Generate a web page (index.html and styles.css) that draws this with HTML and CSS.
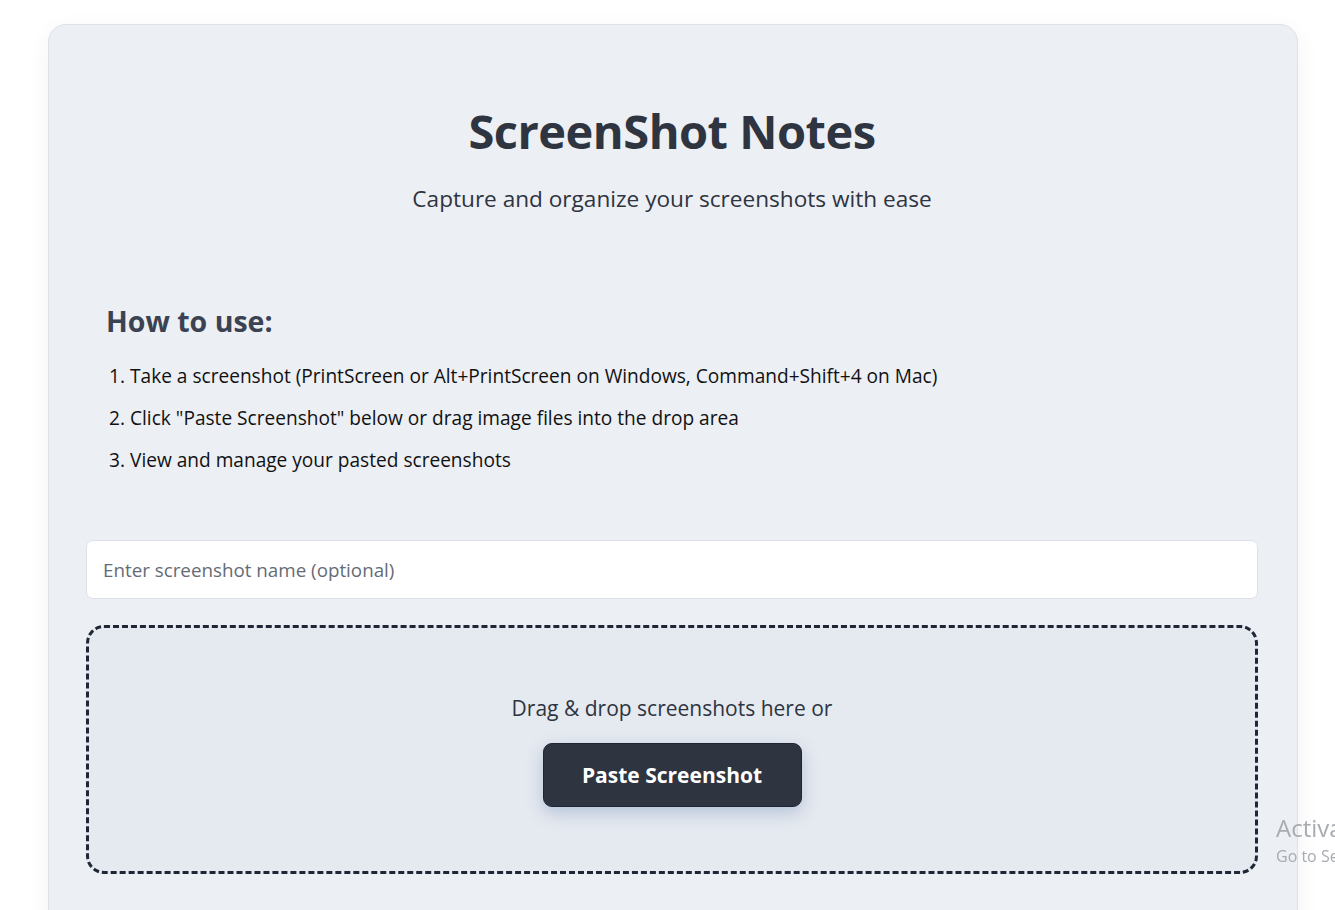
FILE: index.html
```html
<!DOCTYPE html>
<html lang="en">
<head>
<meta charset="utf-8">
<title>ScreenShot Notes</title>
<link rel="stylesheet" href="styles.css">
</head>
<body>
<div class="card">
  <header class="header">
    <h1 class="title">ScreenShot Notes</h1>
    <p class="subtitle">Capture and organize your screenshots with ease</p>
  </header>
  <section class="howto">
    <h2 class="howto-title">How to use:</h2>
    <ol class="steps">
      <li>Take a screenshot (PrintScreen or Alt+PrintScreen on Windows, Command+Shift+4 on Mac)</li>
      <li>Click "Paste Screenshot" below or drag image files into the drop area</li>
      <li>View and manage your pasted screenshots</li>
    </ol>
  </section>
  <input class="name-input" type="text" placeholder="Enter screenshot name (optional)">
  <div class="dropzone">
    <p class="drop-text">Drag &amp; drop screenshots here or</p>
    <button class="paste-btn" type="button">Paste Screenshot</button>
  </div>
</div>
<div class="activate">
  <div class="activate-title">Activate Windows</div>
  <div class="activate-sub">Go to Settings to activate Windows.</div>
</div>
</body>
</html>
```
FILE: styles.css
```css
* { box-sizing: border-box; }
html, body { margin: 0; padding: 0; }
body {
  background: #ffffff;
  font-family: "Open Sans", "Noto Sans", sans-serif;
  color: #2e3440;
  overflow: hidden;
  height: 910px;
}
.card {
  width: 1250px;
  margin: 24px 0 0 48px;
  background: #eceff4;
  border: 1px solid #dde2ea;
  border-radius: 18px;
  box-shadow: 0 6px 24px rgba(0, 0, 0, 0.05);
  padding: 0 39px 40px 37px;
  min-height: 920px;
}
.header {
  text-align: center;
  padding-top: 74px;
}
.title {
  margin: 0;
  font-size: 47px;
  line-height: 64px;
  font-weight: 700;
  color: #2e3440;
  letter-spacing: -0.5px;
}
.subtitle {
  margin: 21px 0 0;
  font-size: 22.6px;
  line-height: 30px;
  color: #2e3440;
}
.howto {
  padding: 88px 20px 0;
}
.howto-title {
  margin: 0;
  font-size: 28.5px;
  line-height: 38px;
  font-weight: 700;
  color: #3b4252;
}
.steps {
  margin: 23px 0 0;
  padding-left: 24px;
  font-size: 19.1px;
  line-height: 26px;
  color: #111111;
}
.steps li { margin-bottom: 16px; }
.name-input {
  display: block;
  width: 100%;
  height: 59px;
  margin-top: 67px;
  padding: 0 16px;
  border: 1px solid #dde2ea;
  border-radius: 7px;
  background: #ffffff;
  font-family: inherit;
  font-size: 18.8px;
  color: #2e3440;
  outline: none;
}
.name-input::placeholder { color: #656b76; }
.dropzone {
  margin-top: 26px;
  height: 249px;
  border: 3px dashed #1f2737;
  border-radius: 18px;
  background: #e5e9f0;
  display: flex;
  flex-direction: column;
  align-items: center;
  padding-top: 65px;
}
.drop-text {
  margin: 0;
  font-size: 21px;
  line-height: 30px;
  color: #2e3440;
}
.paste-btn {
  margin-top: 20px;
  width: 259px;
  height: 64px;
  border: 1px solid #1f2533;
  border-radius: 9px;
  background: #2e3440;
  color: #ffffff;
  font-family: inherit;
  font-size: 21px;
  font-weight: 700;
  box-shadow: 0 6px 16px rgba(94, 129, 172, 0.35);
}
.activate {
  position: fixed;
  left: 1276px;
  top: 812px;
  color: #a8abb0;
  white-space: nowrap;
}
.activate-title { font-size: 24px; line-height: 32px; }
.activate-sub { font-size: 16px; line-height: 24px; }
```
